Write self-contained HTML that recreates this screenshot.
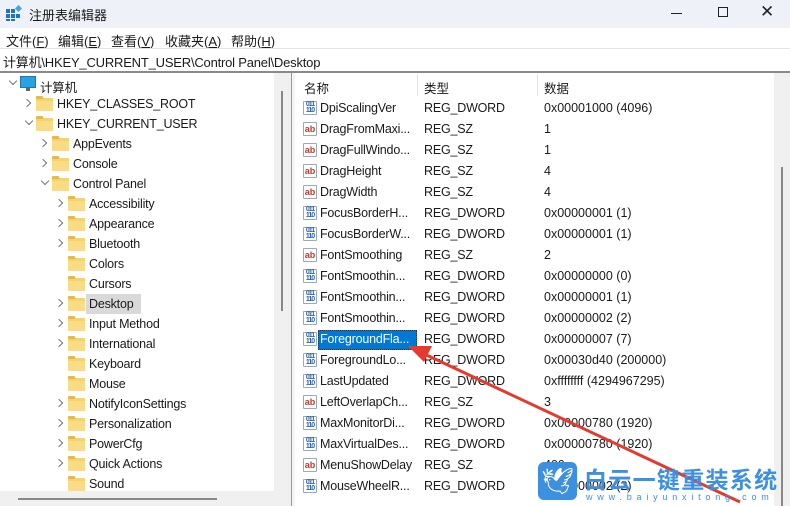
<!DOCTYPE html>
<html><head><meta charset="utf-8"><style>
*{margin:0;padding:0;box-sizing:border-box}
body{width:790px;height:506px;overflow:hidden;background:#fff;font-family:"Liberation Sans","Noto Sans CJK SC",sans-serif;font-size:12.5px;color:#1a1a1a;position:relative}
.a{position:absolute;white-space:nowrap}
.t{letter-spacing:-0.2px}
.fold{position:absolute;width:17px;height:13px;background:#f7d26b;border-radius:1px}
.fold:before{content:"";position:absolute;left:0;top:-2px;width:7px;height:3px;background:#e9b845;border-radius:1px 1px 0 0}
.fold:after{content:"";position:absolute;left:0;top:3px;width:17px;height:10px;background:#fbdc86}
.chev{position:absolute;width:6px;height:6px;border-right:1.3px solid #777;border-bottom:1.3px solid #777}
.r{transform:rotate(-45deg)}.d{transform:rotate(45deg)}
.ic{position:absolute;width:14px;height:14px;font-size:9px;font-weight:bold;line-height:13px;text-align:center;border:1px solid #9ab;border-radius:1px;background:#fff}
.ab{color:#c0392b}.bn{color:#2b5fa8;font-size:7px;line-height:6px;letter-spacing:-1px}
</style></head><body>
<div class="a" style="left:0;top:0;width:790px;height:28px;background:#eef2f8"></div>
<svg class="a" style="left:6px;top:5px" width="16" height="16"><g fill="#1a74c7"><rect x="0" y="4" width="4" height="4"/><rect x="5" y="4" width="4" height="4"/><rect x="0" y="9" width="4" height="4"/><rect x="5" y="9" width="4" height="4"/><rect x="10" y="9" width="4" height="4"/><rect x="0" y="14" width="4" height="2"/><rect x="5" y="14" width="4" height="2"/></g><rect x="10" y="1" width="5" height="5" fill="#4aa3e8" transform="rotate(45 12.5 3.5)"/></svg>
<div class="a" style="left:29px;top:5px;font-size:13px">注册表编辑器</div>
<div class="a" style="left:671px;top:13px;width:11px;height:1px;background:#222"></div>
<div class="a" style="left:718px;top:7px;width:10px;height:10px;border:1px solid #222"></div>
<div class="a" style="left:760px;top:2px;font-size:17px;color:#222">✕</div>
<div class="a" style="left:6px;top:31px;font-size:13px">文件(<u>F</u>)</div>
<div class="a" style="left:58px;top:31px;font-size:13px">编辑(<u>E</u>)</div>
<div class="a" style="left:111px;top:31px;font-size:13px">查看(<u>V</u>)</div>
<div class="a" style="left:165px;top:31px;font-size:13px">收藏夹(<u>A</u>)</div>
<div class="a" style="left:231px;top:31px;font-size:13px">帮助(<u>H</u>)</div>
<div class="a" style="left:0;top:48px;width:790px;height:1px;background:#e6e6e6"></div>
<div class="a t" style="left:3px;top:52px;font-size:13px">计算机\HKEY_CURRENT_USER\Control Panel\Desktop</div>
<div class="a" style="left:0;top:71px;width:790px;height:2px;background:#8a8a8a"></div>
<div class="a" style="left:274px;top:73px;width:17px;height:433px;background:#f0f0f0"></div>
<div class="a" style="left:281px;top:91px;width:2px;height:220px;background:#888"></div>
<div class="a" style="left:0;top:491px;width:291px;height:15px;background:#f0f0f0"></div>
<div class="a" style="left:18px;top:498px;width:199px;height:2px;background:#888"></div>
<div class="a" style="left:291px;top:73px;width:4px;height:433px;background:#f4f4f4;border-left:1px solid #999"></div>
<div id="tree"></div>
<div class="a" style="left:774px;top:73px;width:16px;height:433px;background:#f0f0f0"></div>
<div class="a" style="left:781px;top:167px;width:2px;height:339px;background:#888"></div>
<div class="a" style="left:304px;top:78px">名称</div>
<div class="a" style="left:424px;top:78px">类型</div>
<div class="a" style="left:544px;top:78px">数据</div>
<div class="a" style="left:417px;top:74px;width:1px;height:22px;background:#e5e5e5"></div>
<div class="a" style="left:537px;top:74px;width:1px;height:22px;background:#e5e5e5"></div>
<div id="list"></div>
<svg class="a" style="left:0;top:0" width="790" height="506"><line x1="740" y1="502" x2="420" y2="352" stroke="#e63a2e" stroke-width="3"/><polygon points="408,346 432,346 424,362" fill="#e63a2e"/></svg>
<div class="a" style="left:538px;top:462px;width:39px;height:38px;background:#3d8fe0;border-radius:6px;color:#fff;font-size:26px;text-align:center;line-height:38px">🕊</div>
<div class="a" style="left:584px;top:461px;font-size:23px;color:#3d8fe0;letter-spacing:1.3px;font-weight:bold">白云一键重装系统</div>
<div class="a" style="left:586px;top:492px;font-size:9px;color:#3d8fe0;letter-spacing:4.8px">www.baiyunxitong.com</div>
<script>
var t=[[0,'计算机','d',1],[1,'HKEY_CLASSES_ROOT','r'],[1,'HKEY_CURRENT_USER','d'],[2,'AppEvents','r'],[2,'Console','r'],[2,'Control Panel','d'],
[3,'Accessibility','r'],[3,'Appearance','r'],[3,'Bluetooth','r'],[3,'Colors',''],[3,'Cursors',''],[3,'Desktop','r',0,1],[3,'Input Method','r'],[3,'International','r'],[3,'Keyboard',''],[3,'Mouse',''],[3,'NotifyIconSettings','r'],[3,'Personalization','r'],[3,'PowerCfg','r'],[3,'Quick Actions','r'],[3,'Sound','']];
var h='';t.forEach(function(e,i){var y=74+i*20,l=e[0],ax=10+l*16,ix=20+l*16;
if(e[2])h+='<div class="chev '+e[2]+'" style="left:'+(ax-(e[2]=='d'?0:2))+'px;top:'+(y+(e[2]=='d'?4:6))+'px"></div>';
if(e[3])h+='<div class="a" style="left:20px;top:'+(y+2)+'px;width:16px;height:12px;background:#29a3e0;border:1px solid #1b78b5"></div><div class="a" style="left:26px;top:'+(y+14)+'px;width:4px;height:3px;background:#666"></div>';
else h+='<div class="fold" style="left:'+ix+'px;top:'+(y+4)+'px"></div>';
var tx=ix+(e[3]?20:21);
if(e[4])h+='<div class="a" style="left:'+(tx-3)+'px;top:'+(y)+'px;width:55px;height:20px;background:#d9d9d9"></div>';
h+='<div class="a t" style="left:'+tx+'px;top:'+(y+3)+'px">'+e[1]+'</div>';});
document.getElementById('tree').outerHTML=h;
var L=[['DpiScalingVer','D','0x00001000 (4096)'],['DragFromMaxi...','S','1'],['DragFullWindo...','S','1'],['DragHeight','S','4'],['DragWidth','S','4'],['FocusBorderH...','D','0x00000001 (1)'],['FocusBorderW...','D','0x00000001 (1)'],['FontSmoothing','S','2'],['FontSmoothin...','D','0x00000000 (0)'],['FontSmoothin...','D','0x00000001 (1)'],['FontSmoothin...','D','0x00000002 (2)'],['ForegroundFla...','D','0x00000007 (7)'],['ForegroundLo...','D','0x00030d40 (200000)'],['LastUpdated','D','0xffffffff (4294967295)'],['LeftOverlapCh...','S','3'],['MaxMonitorDi...','D','0x00000780 (1920)'],['MaxVirtualDes...','D','0x00000780 (1920)'],['MenuShowDelay','S','400'],['MouseWheelR...','D','0x00000002 (2)']];
h='';L.forEach(function(e,i){var y=98+i*21;
h+=e[1]=='S'?'<div class="ic ab" style="left:303px;top:'+(y+3)+'px">ab</div>':'<div class="ic bn" style="left:303px;top:'+(y+3)+'px">011<br>110</div>';
if(i==11)h+='<div class="a" style="left:318px;top:'+(y+1)+'px;width:99px;height:20px;background:#0078d7;border:1px dotted #333"></div>';
h+='<div class="a t" style="left:320px;top:'+(y+3)+'px;'+(i==11?'color:#fff':'')+'">'+e[0]+'</div>';
h+='<div class="a t" style="left:424px;top:'+(y+3)+'px">'+(e[1]=='S'?'REG_SZ':'REG_DWORD')+'</div>';
h+='<div class="a" style="left:544px;top:'+(y+3)+'px">'+e[2]+'</div>';});
document.getElementById('list').outerHTML=h;
</script>
</body></html>
